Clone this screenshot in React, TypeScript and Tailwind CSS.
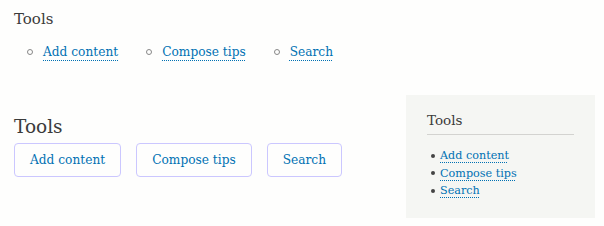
import React from "react";

const links = ["Add content", "Compose tips", "Search"];

export default function App() {
  return (
    <div className="w-[604px] h-[226px] overflow-hidden bg-[#fefefd] font-['DejaVu_Serif',serif] text-[#3b3b3b]">
      <div className="pl-[14px] pt-[9px]">
        <h2 className="text-[15px] leading-[20px] font-normal">Tools</h2>
        <ul className="mt-[15px] ml-[13px] flex gap-[28px] text-[12.2px] leading-[16px]">
          {links.map((l) => (
            <li key={l} className="flex items-center">
              <span className="mr-[10px] h-[6px] w-[6px] rounded-full border border-[#888]" />
              <a className="text-[#0071b3] underline decoration-dotted decoration-[1px] underline-offset-[4px]">
                {l}
              </a>
            </li>
          ))}
        </ul>
      </div>
      <div className="mt-[35px] flex items-start">
        <div className="w-[406px] pl-[14px] pt-[21px]">
          <h2 className="text-[18.5px] leading-[22px] font-normal">Tools</h2>
          <div className="mt-[5px] flex gap-[15px]">
            {links.map((l) => (
              <button
                key={l}
                className="h-[34px] rounded-[4px] border border-[#cbc7ff] bg-transparent px-[15px] text-[12.2px] text-[#0071b3]"
              >
                {l}
              </button>
            ))}
          </div>
        </div>
        <div className="h-[123px] w-[189px] bg-[#f5f6f3] px-[21px] pt-[15px]">
          <h2 className="border-b border-[#d3d3d0] pb-[4px] text-[13.5px] leading-[20px] font-normal">Tools</h2>
          <ul className="mt-[12px] pl-[4px] text-[11.2px] leading-[17.5px]">
            {links.map((l) => (
              <li key={l} className="flex items-center">
                <span className="mr-[5px] h-[4px] w-[4px] rounded-full bg-[#444]" />
                <a className="text-[#0071b3] underline decoration-dotted decoration-[1px] underline-offset-[3px]">
                  {l}
                </a>
              </li>
            ))}
          </ul>
        </div>
      </div>
    </div>
  );
}
